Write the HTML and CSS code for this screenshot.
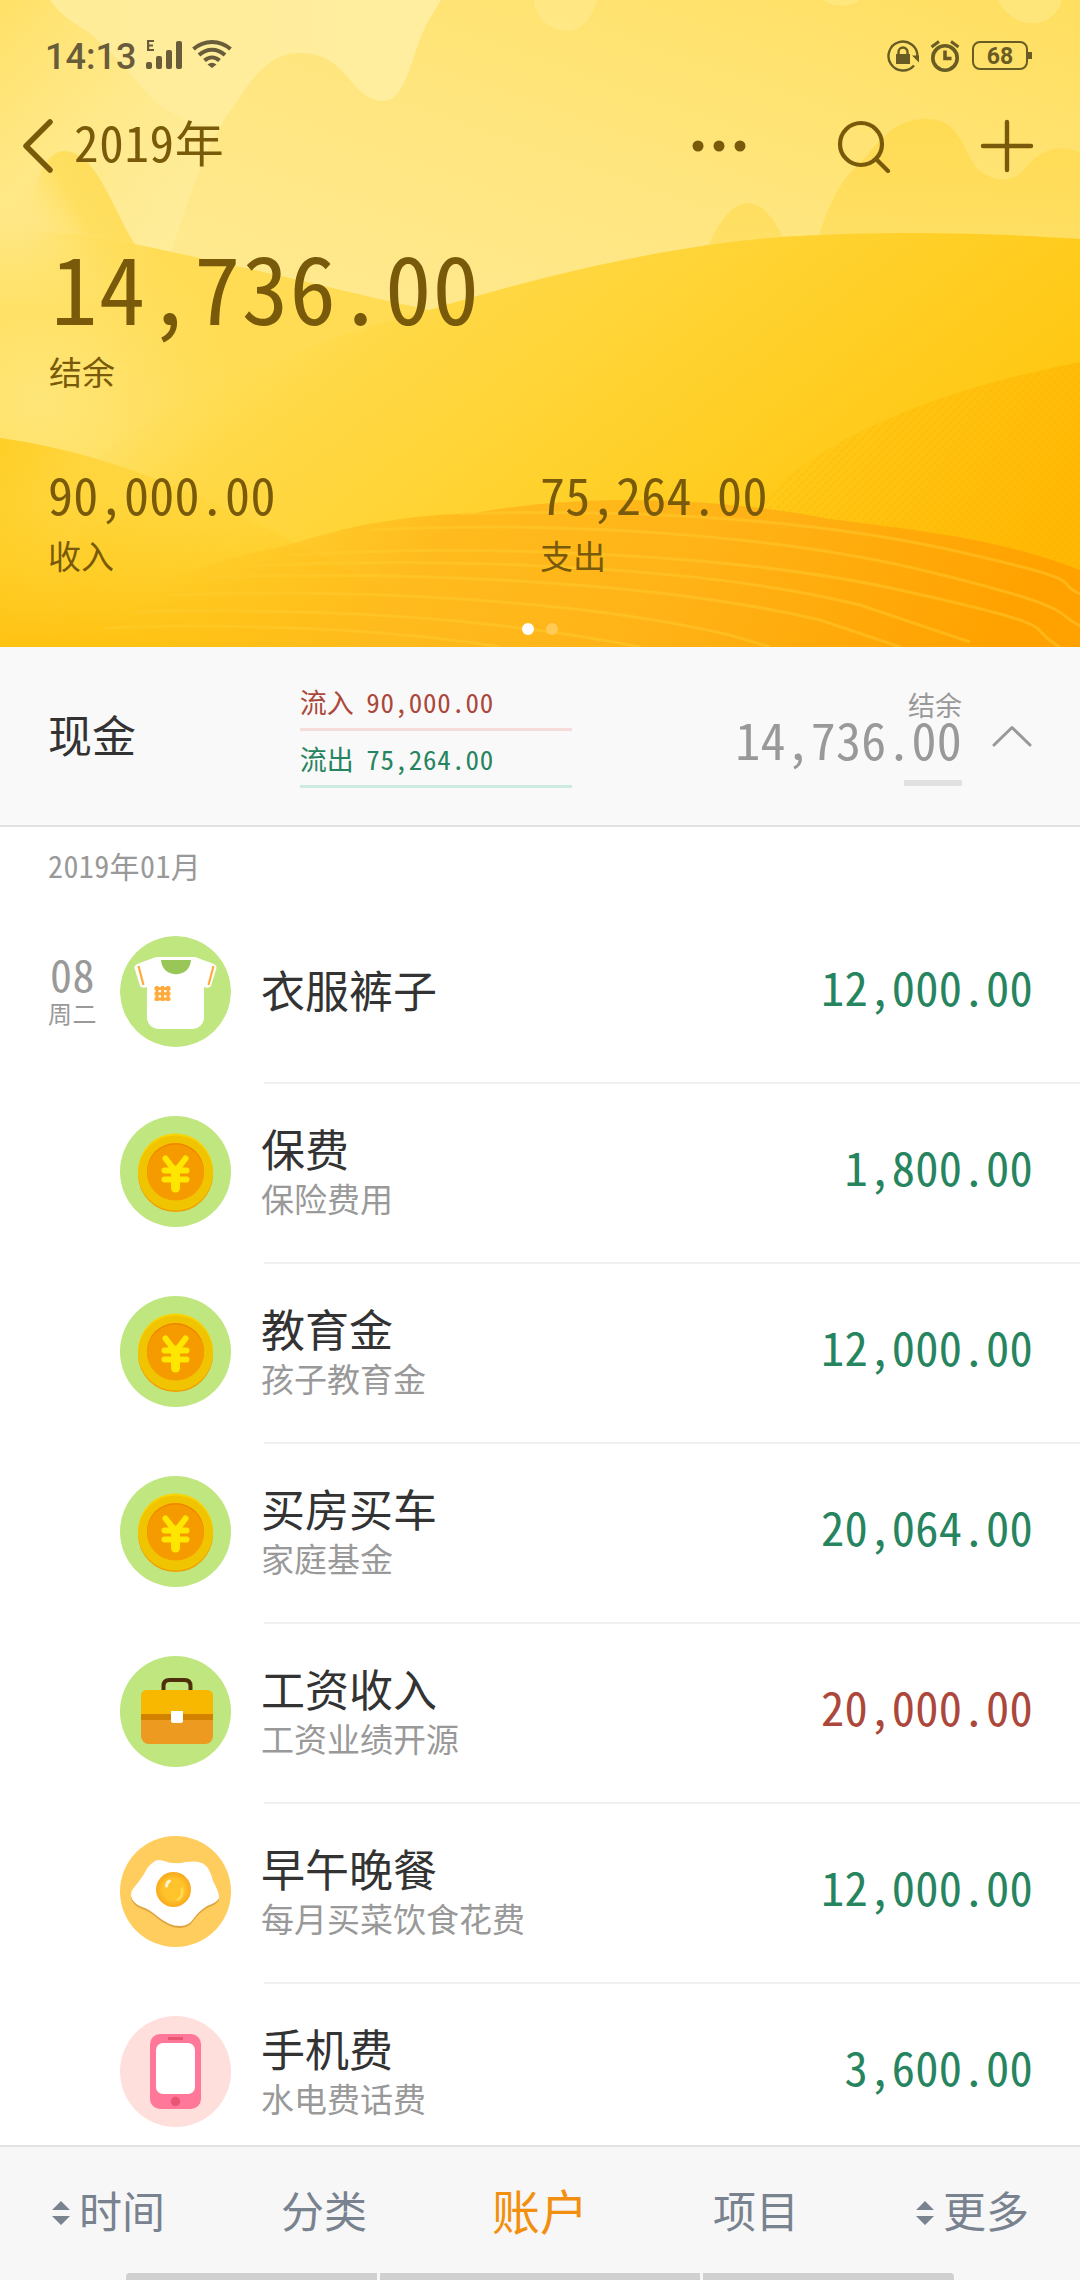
FILE: index.html
```html
<!DOCTYPE html>
<html lang="zh-CN">
<head>
<meta charset="utf-8">
<title>2019年</title>
<link rel="stylesheet" href="styles.css">
</head>
<body>
<svg class="defs" width="0" height="0">
  <symbol id="coin" viewBox="0 0 111 111">
    <circle cx="55.500" cy="58.500" r="37.500" fill="#f39c00"/>
    <circle cx="55.500" cy="55" r="37.500" fill="#fbd400"/>
    <circle cx="55.500" cy="57" r="37.500" fill="#f0c400"/>
    <circle cx="55.500" cy="55.500" r="28.500" fill="#ef8200"/>
    <path d="M27 57a28.500 28.500 0 0 1 57 0a28.500 27.500 0 0 1-57 0z" fill="#f59b00"/>
    <path d="M45.500 42.500l10 13 10-13M44.500 54.500h22M44.500 63.500h22" fill="none" stroke="#ffe600" stroke-width="6" stroke-linecap="round"/>
    <path d="M55.500 54v18" fill="none" stroke="#ffe600" stroke-width="9" stroke-linecap="round"/>
  </symbol>
  <symbol id="sort" viewBox="0 0 20 26">
    <path d="M10 1l9 9H1zM10 25l9-9H1z" fill="#79828f"/>
  </symbol>
</svg>

<header class="hero">
  <svg class="scene" viewBox="0 0 1080 647" preserveAspectRatio="none">
    <defs>
      <linearGradient id="sky" x1="0" y1="0" x2="1" y2="0"><stop offset="0" stop-color="#ffec98"/><stop offset=".4" stop-color="#ffee9f"/><stop offset="1" stop-color="#ffe680"/></linearGradient>
      <linearGradient id="corner" x1="0" y1="0" x2=".9" y2="1"><stop offset="0" stop-color="#ffe066"/><stop offset="1" stop-color="#ffe98c" stop-opacity="0"/></linearGradient>
      <linearGradient id="far" x1="1" y1="0" x2="0.2" y2="1"><stop offset="0" stop-color="#ffdf60"/><stop offset=".55" stop-color="#ffe681"/><stop offset="1" stop-color="#ffea94"/></linearGradient>
      <linearGradient id="peak" x1="0" y1="0" x2="0" y2="1"><stop offset="0" stop-color="#ffd94a"/><stop offset="1" stop-color="#ffde5e"/></linearGradient>
      <linearGradient id="knoll" gradientUnits="userSpaceOnUse" x1="30" y1="220" x2="100" y2="180"><stop offset="0" stop-color="#ffe57c" stop-opacity="0"/><stop offset=".6" stop-color="#ffdf5f"/><stop offset="1" stop-color="#ffde5e"/></linearGradient>
      <linearGradient id="base" gradientUnits="userSpaceOnUse" x1="0" y1="215" x2="0" y2="310"><stop offset="0" stop-color="#ffe57c" stop-opacity="0"/><stop offset="1" stop-color="#ffdd56"/></linearGradient>
      <linearGradient id="left" gradientUnits="userSpaceOnUse" x1="20" y1="0" x2="160" y2="0"><stop offset="0" stop-color="#ffdd56" stop-opacity="0"/><stop offset="1" stop-color="#ffdc53"/></linearGradient>
      <radialGradient id="glow" gradientUnits="userSpaceOnUse" cx="40" cy="400" r="190"><stop offset="0" stop-color="#ffe679"/><stop offset="1" stop-color="#ffe372" stop-opacity="0"/></radialGradient>
      <linearGradient id="dune" gradientUnits="userSpaceOnUse" x1="200" y1="360" x2="560" y2="820"><stop offset="0" stop-color="#ffde58" stop-opacity="0"/><stop offset=".14" stop-color="#ffd948"/><stop offset=".5" stop-color="#ffd22f"/><stop offset="1" stop-color="#ffc60e"/></linearGradient>
      <linearGradient id="low" gradientUnits="userSpaceOnUse" x1="0" y1="440" x2="260" y2="560"><stop offset="0" stop-color="#ffcf27"/><stop offset="1" stop-color="#ffd130" stop-opacity="0"/></linearGradient>
      <linearGradient id="lowfill" gradientUnits="userSpaceOnUse" x1="0" y1="500" x2="0" y2="647"><stop offset="0" stop-color="#ffcb1c" stop-opacity="0"/><stop offset="1" stop-color="#ffc212"/></linearGradient>
      <linearGradient id="amber" gradientUnits="userSpaceOnUse" x1="790" y1="400" x2="1040" y2="560"><stop offset="0" stop-color="#ffca18" stop-opacity=".3"/><stop offset=".35" stop-color="#ffc411"/><stop offset="1" stop-color="#ffb803"/></linearGradient>
      <linearGradient id="front" gradientUnits="userSpaceOnUse" x1="220" y1="480" x2="800" y2="900"><stop offset="0" stop-color="#ffbe18" stop-opacity="0"/><stop offset=".3" stop-color="#ffbb1d"/><stop offset=".6" stop-color="#ffb317"/><stop offset="1" stop-color="#ffa200"/></linearGradient>
      <pattern id="grain" width="8" height="8" patternUnits="userSpaceOnUse"><path d="M1 4l3-3M5 8l3-3" stroke="#f5a500" stroke-opacity=".28" stroke-width="1.300"/></pattern>
    </defs>
    <path fill="url(#sky)" d="M0 0h1080v647H0z"/>
    <path fill="url(#corner)" d="M0 0h50C70 28 88 25 105 48C140 75 150 120 215 125V250H0z"/>
    <path fill="url(#far)" d="M165 270C188 205 202 145 237 102C262 60 282 52 304 53C350 56 350 101 385 101C408 99 412 48 430 18L441 0H1080V400H165z"/>
    <path fill="#fff09f" fill-opacity=".4" d="M534 0H597C591 20 581 31 566 31C550 29 541 22 534 5zM824 0H859C853 7 832 8 824 0zM998 0H1062C1053 31 1014 31 998 0z"/>
    <path fill="#ffe785" d="M0 207C26 206 26 178 44 160Q60 145 80 160L135 250V290H0z"/>
    <path fill="url(#knoll)" d="M20 290C28 190 42 151 65 151C98 153 112 210 137 247V290z"/>
    <path fill="url(#peak)" fill-opacity=".75" d="M707 250C719 220 733 203 748 203C767 204 777 226 786 243V260H707zM815 250C826 208 839 181 861 162C883 137 896 118 928 119C961 119 962 152 979 170C997 184 1015 183 1028 165C1044 148 1059 145 1080 152V260H815z"/>
    <path fill="url(#base)" d="M0 215L137 244L245 268C340 289 370 298 430 310L620 360V647H0z"/>
    <path fill="url(#left)" d="M0 230C90 230 160 250 245 268C340 289 370 298 430 310L620 360V647H0z"/>
    <path fill="url(#glow)" d="M0 240H240V560H0z"/>
    <path fill="#ffdd55" d="M430 310C550 273 690 241 800 236C910 230 1000 234 1080 239V500H500z" opacity=".85"/>
    <path fill="url(#dune)" d="M90 462C180 390 330 335 430 310C550 273 690 241 800 236C910 230 1000 234 1080 239V647H60z"/>
    <path fill="url(#low)" d="M0 438C60 446 150 468 270 530L360 647H0z"/>
    <path fill="url(#lowfill)" d="M0 438C60 446 150 468 270 530L500 647H0z"/>
    <path fill="url(#amber)" d="M1080 362C960 386 900 412 850 437C800 464 760 490 735 530L1080 600z"/>
    <path fill="url(#grain)" d="M1080 362C960 386 900 412 850 437C800 464 770 490 760 510L1080 575z"/>
    <path fill="url(#front)" d="M60 647C120 590 210 560 285 546C350 525 400 516 475 513C590 492 720 498 830 519C940 533 1000 540 1080 570V647z"/>
    <g fill="none" stroke="#ffce30" stroke-opacity=".45" stroke-width="3">
      <path d="M290 555C450 545 720 550 900 590S1020 625 1060 647"/>
      <path d="M370 530C560 520 780 535 930 572S1050 610 1080 626"/>
      <path d="M460 514C640 508 820 520 960 552S1050 580 1080 594"/>
      <path d="M210 577C400 571 650 580 820 620L900 647"/>
      <path d="M170 595C360 588 580 600 730 635L770 647"/>
      <path d="M135 612C310 607 490 617 640 647"/>
      <path d="M105 628C240 622 400 630 500 647"/>
      <path d="M250 566C440 557 700 565 860 605L970 642"/>
    </g>
  </svg>

  <div class="status">
    <span class="clock">14:13</span>
    <svg class="signal" width="38" height="32" viewBox="0 0 38 32" fill="#685c3a">
      <path d="M1 2h7v2H3.200v2.500H7v2H3.200V11H8v2H1z"/>
      <rect y="24" width="6" height="7" rx="2"/><rect x="10" y="18" width="6" height="13" rx="2"/><rect x="20" y="12" width="6" height="19" rx="2"/><rect x="30" y="3" width="6" height="28" rx="2"/>
    </svg>
    <svg class="wifi" width="40" height="30" viewBox="0 0 40 30" fill="none" stroke="#685c3a" stroke-width="4">
      <path d="M1.500 10C12 .500 28 .500 38.500 10M7 16C15 9 25 9 33 16M12.500 21.500C17 17.500 23 17.500 27.500 21.500"/>
      <path d="M15.500 25.500Q20 22 24.500 25.500L20 29z" fill="#685c3a" stroke="none"/>
    </svg>
    <div class="status-right">
      <svg width="32" height="32" viewBox="0 0 32 32" fill="none" stroke="#685c24" stroke-width="2.400">
        <path d="M27 25.500A14.500 14.500 0 1 1 30.500 16"/><path d="M25 15.500h7v7z" fill="#685c24" stroke="none"/>
        <path d="M9 14h14v10H9z" fill="#685c24" stroke="none"/><path d="M11.500 15v-3a4.500 4.500 0 0 1 9 0v3"/>
      </svg>
      <svg width="30" height="32" viewBox="0 0 30 32" fill="none" stroke="#685c24">
        <circle cx="15" cy="18" r="12.200" stroke-width="3.600"/><path d="M15 10.500v8h6.500" stroke-width="3.600"/><path d="M1.500 7L9 1.500M28.500 7L21 1.500" stroke-width="3"/>
      </svg>
      <div class="battery">68</div>
    </div>
  </div>

  <nav class="toolbar">
    <svg class="back" width="30" height="54" viewBox="0 0 30 54"><path d="M27 3L3 27l24 24" fill="none" stroke="#785a0a" stroke-width="5.500" stroke-linecap="round" stroke-linejoin="round"/></svg>
    <h1>2019年</h1>
    <svg width="54" height="54" viewBox="0 0 54 54" fill="#785a0a"><circle cx="6" cy="27" r="5.500"/><circle cx="27" cy="27" r="5.500"/><circle cx="48" cy="27" r="5.500"/></svg>
    <svg class="search" width="54" height="54" viewBox="0 0 54 54" fill="none" stroke="#785a0a" stroke-width="4.200" stroke-linecap="round"><circle cx="24" cy="25" r="21"/><path d="M39 40l12 12"/></svg>
    <svg class="plus" width="54" height="54" viewBox="0 0 54 54" fill="none" stroke="#785a0a" stroke-width="4.400" stroke-linecap="round"><path d="M27 3v48M3 27h48"/></svg>
  </nav>

  <div class="balance"><span class="num">14,736.00</span><small>结余</small></div>
  <div class="totals">
    <div class="total"><span class="num">90,000.00</span><small>收入</small></div>
    <div class="total"><span class="num">75,264.00</span><small>支出</small></div>
  </div>
  <div class="pager"><i class="on"></i><i></i></div>
</header>

<section class="account">
  <h2>现金</h2>
  <div class="flows">
    <p class="flow in">流入 <span class="num">90,000.00</span></p>
    <p class="flow out">流出 <span class="num">75,264.00</span></p>
  </div>
  <div class="rest"><small>结余</small><span class="num">14,736.00</span><i></i></div>
  <svg class="fold" width="40" height="22" viewBox="0 0 40 22"><path d="M2 20L20 2.500 38 20" fill="none" stroke="#999" stroke-width="3" stroke-linecap="round" stroke-linejoin="round"/></svg>
</section>

<main class="list">
  <div class="month">2019年01月</div>

  <article class="row">
    <div class="day"><b>08</b><small>周二</small></div>
    <svg class="icon" viewBox="0 0 111 111">
      <circle cx="55.500" cy="55.500" r="55.500" fill="#bfe67f"/>
      <path d="M36 21H75L94 28Q97 30 96.500 32L91 50Q89 53 84 51V83Q82 92 73 93H38Q29 92 27 83V51Q22 53 20 50L14.500 32Q14 30 17 28z" fill="#fff"/>
      <path d="M41 24H71C70 43 42 43 41 24z" fill="#98c657"/>
      <path d="M18.500 30l5 19M93.500 30l-5 19" stroke="#ffab3c" stroke-width="2.200"/>
      <path d="M34.500 52.500h16M34.500 57.700h16M34.500 63h16M37 50v15M42.500 50v15M48 50v15" stroke="#ffab3c" stroke-width="3"/>
    </svg>
    <div class="body"><div class="text"><h3>衣服裤子</h3></div><span class="num out">12,000.00</span></div>
  </article>

  <article class="row">
    <div class="day"></div>
    <svg class="icon green" viewBox="0 0 111 111"><use href="#coin"/></svg>
    <div class="body"><div class="text"><h3>保费</h3><p>保险费用</p></div><span class="num out">1,800.00</span></div>
  </article>

  <article class="row">
    <div class="day"></div>
    <svg class="icon green" viewBox="0 0 111 111"><use href="#coin"/></svg>
    <div class="body"><div class="text"><h3>教育金</h3><p>孩子教育金</p></div><span class="num out">12,000.00</span></div>
  </article>

  <article class="row">
    <div class="day"></div>
    <svg class="icon green" viewBox="0 0 111 111"><use href="#coin"/></svg>
    <div class="body"><div class="text"><h3>买房买车</h3><p>家庭基金</p></div><span class="num out">20,064.00</span></div>
  </article>

  <article class="row">
    <div class="day"></div>
    <svg class="icon green" viewBox="0 0 111 111">
      <path d="M43.500 36v-6q0-6 6-6h15q6 0 6 6v6" fill="none" stroke="#4e2e0b" stroke-width="4"/>
      <rect x="21" y="34" width="72" height="54" rx="8" fill="#ec9a20"/>
      <path d="M21 60V40q0-6 6-6h60q6 0 6 6v20z" fill="#f8b800"/>
      <path d="M21 58h72v6H21z" fill="#d38200"/>
      <path d="M51 55h12v10q0 2-2 2h-8q-2 0-2-2z" fill="#fff"/>
    </svg>
    <div class="body"><div class="text"><h3>工资收入</h3><p>工资业绩开源</p></div><span class="num in">20,000.00</span></div>
  </article>

  <article class="row">
    <div class="day"></div>
    <svg class="icon yellow" viewBox="0 0 111 111">
      <defs><radialGradient id="yolk"><stop offset=".6" stop-color="#ffc32b"/><stop offset="1" stop-color="#f9a91d"/></radialGradient></defs>
      <path transform="translate(0 2)" fill="#dda440" d="M35 25Q38 23 44 25Q54 29 66 26Q80 24 85 29Q90 33 93 45Q100 58 99 62Q98 66 87 70Q78 76 74 82Q69 90 60 90Q49 90 37 80Q29 73 22 71Q12 67 11 60Q10 55 17 48Q24 39 28 31Q32 27 35 25z"/>
      <path fill="#fff" d="M35 25Q38 23 44 25Q54 29 66 26Q80 24 85 29Q90 33 93 45Q100 58 99 62Q98 66 87 70Q78 76 74 82Q69 90 60 90Q49 90 37 80Q29 73 22 71Q12 67 11 60Q10 55 17 48Q24 39 28 31Q32 27 35 25z"/>
      <circle cx="53.500" cy="53.500" r="17.500" fill="url(#yolk)"/>
      <path d="M46.500 50q.500-4 3-5" fill="none" stroke="#fff3cf" stroke-width="3" stroke-linecap="round"/>
      <path d="M62 53q1 8-4 10.500" fill="none" stroke="#ffd752" stroke-width="3" stroke-linecap="round"/>
    </svg>
    <div class="body"><div class="text"><h3>早午晚餐</h3><p>每月买菜饮食花费</p></div><span class="num out">12,000.00</span></div>
  </article>

  <article class="row">
    <div class="day"></div>
    <svg class="icon pink" viewBox="0 0 111 111">
      <rect x="30" y="18" width="51" height="75" rx="10" fill="#ff7799"/>
      <rect x="36" y="27" width="39" height="51" rx="7" fill="#fff"/>
      <path d="M48 21h15v3H48z" fill="#ea5573"/><circle cx="55.500" cy="85.500" r="4.700" fill="#ea5573"/>
    </svg>
    <div class="body"><div class="text"><h3>手机费</h3><p>水电费话费</p></div><span class="num out">3,600.00</span></div>
  </article>
</main>

<footer class="tabs">
  <div class="tab"><svg width="20" height="26"><use href="#sort"/></svg>时间</div>
  <div class="tab">分类</div>
  <div class="tab active">账户</div>
  <div class="tab">项目</div>
  <div class="tab"><svg width="20" height="26"><use href="#sort"/></svg>更多</div>
  <div class="gesture"><i></i><i></i><i></i></div>
</footer>
</body>
</html>
```
FILE: styles.css
```css
* { box-sizing: border-box; margin: 0; padding: 0; }
body {
  width: 1080px; height: 2280px; overflow: hidden;
  display: flex; flex-direction: column;
  font-family: "Noto Sans CJK SC", sans-serif; font-weight: 400;
  background: #fff; color: #333;
}
h1, h2, h3, b { font-weight: 400; }
svg { display: block; flex: none; }
i, small { font-style: normal; display: block; }
.defs { position: absolute; }
.num, .day b, h1, .month { font-feature-settings: "hwid"; white-space: nowrap; }
.in { color: #ac473b; }
.out { color: #26845f; }

.hero { position: relative; height: 647px; flex: none; color: #785a0a; }
.scene { position: absolute; inset: 0; width: 100%; height: 100%; z-index: -1; }
.status { display: flex; align-items: center; height: 112px; padding: 0 48px 0 45px; color: #685c3a; }
.clock { font: 500 36px/40px Roboto, sans-serif; width: 101px; padding-top: 2px; }
.signal { margin-top: -4px; }
.wifi { margin: -4px 0 0 8px; }
.status-right { display: flex; align-items: center; gap: 11px; margin-left: auto; color: #685c24; }
.battery {
  position: relative; width: 56px; height: 29px; margin: -2px 4px 0 1px;
  border: 2px solid #685c24; border-radius: 8px;
  font: 700 23px/28px Roboto, sans-serif; text-align: center;
}
.battery::after { content: ""; position: absolute; right: -6px; top: 9px; width: 4px; height: 7px; background: #685c24; }

.toolbar { display: flex; align-items: center; height: 68px; padding: 0 46px 0 23px; }
.toolbar h1 { font-size: 49px; line-height: 64px; letter-spacing: .7px; flex: 1; margin: -11px 0 0 21px; }
.toolbar .search { margin-left: 91px; }
.toolbar .plus { margin-left: 89px; }

.balance { padding: 57px 0 0 51px; }
.balance .num { display: block; font-size: 93px; line-height: 96px; letter-spacing: 1.2px; }
.balance small, .total small { font-size: 33px; line-height: 40px; }
.balance small { margin: 18px 0 0 -2px; }
.totals { display: flex; padding: 72px 0 0 48px; }
.total { width: 492px; }
.total .num { display: block; font-size: 50px; line-height: 60px; letter-spacing: .3px; }
.total small { margin-top: 12px; }
.pager { display: flex; justify-content: center; gap: 12px; margin-top: 48px; }
.pager i { width: 12px; height: 12px; border-radius: 50%; background: #ffca55; }
.pager .on { background: #fff; }

.account { display: flex; height: 180px; flex: none; padding: 0 48px; background: #f9f9f9; border-bottom: 2px solid #e2e2e2; }
.account h2 { width: 252px; font-size: 44px; line-height: 174px; }
.flows { width: 273px; padding-top: 27px; }
.flow { height: 57px; border-bottom: 3px solid; font-size: 27px; line-height: 56px; font-feature-settings: "hwid"; white-space: nowrap; }
.flow .num { letter-spacing: .7px; margin-left: -1px; }
.flow.in { border-color: #f5dcdb; }
.flow.out { border-color: #cdeae0; }
.rest { width: 390px; padding-top: 41px; text-align: right; color: #999; }
.rest small { font-size: 27px; line-height: 33px; }
.rest .num { display: block; font-size: 50px; line-height: 34px; letter-spacing: .2px; }
.rest i { width: 58px; height: 6px; margin: 25px 0 0 auto; background: #e1e1e1; }
.fold { margin: 78px 0 0 30px; }

.list { flex: 1; min-height: 0; overflow: hidden; }
.month { height: 77px; padding-left: 48px; font-size: 30px; line-height: 76px; letter-spacing: .4px; color: #999; }
.row { display: flex; height: 180px; }
.day { width: 120px; padding-top: 44px; color: #999; }
.day b { display: block; padding-left: 50px; font-size: 44px; line-height: 50px; letter-spacing: .5px; }
.day small { padding-left: 48px; font-size: 24px; line-height: 30px; letter-spacing: .5px; }
.icon { width: 111px; height: 111px; margin-top: 32px; border-radius: 50%; }
.green { background: #bfe67f; }
.yellow { background: #ffcd5d; }
.pink { background: #ffdfdb; }
.body { flex: 1; display: flex; align-items: center; justify-content: space-between; margin-left: 33px; padding: 0 47px 8px 0; border-bottom: 2px solid #eff0f1; }
.text { margin-left: -3px; }
.text h3 { font-size: 44px; line-height: 52px; }
.text h3:not(:only-child) { margin-top: 6px; }
.text p { font-size: 33px; line-height: 48px; color: #999; }
.body .num { font-size: 46.500px; line-height: 60px; letter-spacing: .3px; margin-bottom: 6px; }

.tabs { position: relative; display: flex; height: 135px; flex: none; border-top: 2px solid #e2e2e2; background: #f7f7f7; color: #79828f; }
.tab { width: 216px; height: 128px; padding-bottom: 5px; display: flex; align-items: center; justify-content: center; gap: 8px; font-size: 43px; }
.tab svg { margin-top: 8px; }
.active { color: #f28f0e; font-size: 48px; }
.gesture { position: absolute; left: 126px; right: 126px; bottom: 0; height: 7px; display: grid; grid-template-columns: 251px 1fr 251px; gap: 3px; overflow: hidden; border-radius: 4px 4px 0 0; }
.gesture i { background: #d0d0d0; }
```
